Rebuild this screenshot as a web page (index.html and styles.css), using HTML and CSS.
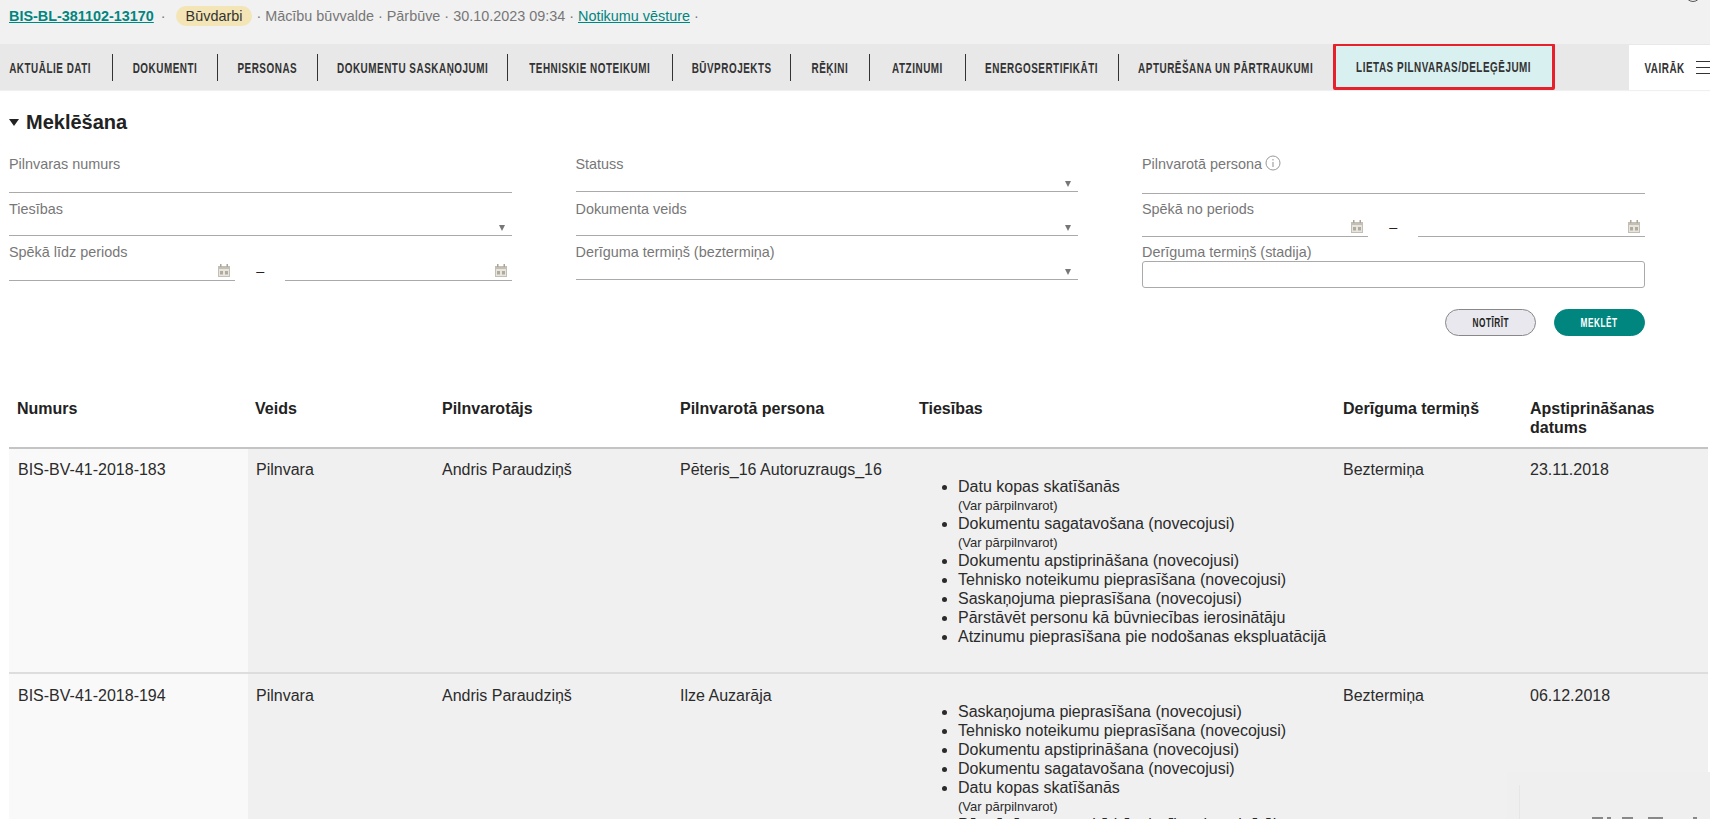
FILE: index.html
```html
<!DOCTYPE html>
<html lang="lv">
<head>
  <meta charset="UTF-8" />
  <title>Lietas pilnvaras/deleģējumi</title>
  <link rel="stylesheet" href="styles.css">
</head>
<body>
  <div class="topbar">
    <a class="case-link" href="#">BIS-BL-381102-13170</a>
    <span class="dot-first">·</span>
    <span class="badge">Būvdarbi</span>
    <span class="meta">· Mācību būvvalde · Pārbūve · 30.10.2023 09:34 ·</span>
    <a class="history-link" href="#">Notikumu vēsture</a>
    <span class="meta">·</span>
    <span class="user-circle"></span>
  </div>

  <nav class="tabs">
    <a class="tab tab-1" href="#"><span class="narrow">Aktuālie dati</span></a>
    <a class="tab tab-2" href="#"><span class="narrow">Dokumenti</span></a>
    <a class="tab tab-3" href="#"><span class="narrow">Personas</span></a>
    <a class="tab tab-4" href="#"><span class="narrow">Dokumentu saskaņojumi</span></a>
    <a class="tab tab-5" href="#"><span class="narrow">Tehniskie noteikumi</span></a>
    <a class="tab tab-6" href="#"><span class="narrow">Būvprojekts</span></a>
    <a class="tab tab-7" href="#"><span class="narrow">Rēķini</span></a>
    <a class="tab tab-8" href="#"><span class="narrow">Atzinumi</span></a>
    <a class="tab tab-9" href="#"><span class="narrow">Energosertifikāti</span></a>
    <a class="tab tab-10" href="#"><span class="narrow">Apturēšana un pārtraukumi</span></a>
    <a class="tab-active" href="#"><span class="narrow">Lietas pilnvaras/deleģējumi</span></a>
    <a class="tab-more" href="#">
      <span class="more-text"><span class="narrow">Vairāk</span></span>
      <span class="burger"><i></i><i></i><i></i></span>
    </a>
  </nav>

  <main class="content">
    <h2 class="search-title"><span class="caret"></span>Meklēšana</h2>

    <form class="search-form">
      <div class="field">
        <label>Pilnvaras numurs</label>
        <div class="control h-21"></div>
      </div>
      <div class="field">
        <label>Statuss</label>
        <div class="control h-20"><span class="arrow"></span></div>
      </div>
      <div class="field">
        <label class="label-info">Pilnvarotā persona
          <svg class="info" width="16" height="16" viewBox="0 0 16 16"><circle cx="8" cy="8" r="7" fill="none" stroke="#999" stroke-width="1"/><path d="M8 4v1.400M8 7v5" stroke="#999" stroke-width="1.100" fill="none"/></svg>
        </label>
        <div class="control h-22"></div>
      </div>

      <div class="field">
        <label>Tiesības</label>
        <div class="control h-19"><span class="arrow"></span></div>
      </div>
      <div class="field">
        <label>Dokumenta veids</label>
        <div class="control h-19"><span class="arrow"></span></div>
      </div>
      <div class="field">
        <label>Spēkā no periods</label>
        <div class="date-range h-20">
          <div class="control">
            <svg class="cal" width="12" height="13" viewBox="0 0 12 13"><use href="#cal-icon"/></svg>
          </div>
          <span class="dash">–</span>
          <div class="control">
            <svg class="cal" width="12" height="13" viewBox="0 0 12 13"><use href="#cal-icon"/></svg>
          </div>
        </div>
      </div>

      <div class="field">
        <label>Spēkā līdz periods</label>
        <div class="date-range h-21">
          <div class="control">
            <svg class="cal" width="12" height="13" viewBox="0 0 12 13"><use href="#cal-icon"/></svg>
          </div>
          <span class="dash">–</span>
          <div class="control">
            <svg class="cal" width="12" height="13" viewBox="0 0 12 13"><use href="#cal-icon"/></svg>
          </div>
        </div>
      </div>
      <div class="field">
        <label>Derīguma termiņš (beztermiņa)</label>
        <div class="control h-20"><span class="arrow"></span></div>
      </div>
      <div class="field">
        <label>Derīguma termiņš (stadija)</label>
        <div class="text-box"></div>
      </div>
    </form>

    <div class="form-buttons">
      <button class="btn btn-clear" type="button"><span class="narrow">Notīrīt</span></button>
      <button class="btn btn-search" type="button"><span class="narrow">Meklēt</span></button>
    </div>

    <table class="results">
      <thead>
        <tr>
          <th class="c-num">Numurs</th>
          <th class="c-type">Veids</th>
          <th class="c-from">Pilnvarotājs</th>
          <th class="c-to">Pilnvarotā persona</th>
          <th class="c-rights">Tiesības</th>
          <th class="c-term">Derīguma termiņš</th>
          <th class="c-date">Apstiprināšanas datums</th>
        </tr>
      </thead>
      <tbody>
        <tr>
          <td>BIS-BV-41-2018-183</td>
          <td>Pilnvara</td>
          <td>Andris Paraudziņš</td>
          <td>Pēteris_16 Autoruzraugs_16</td>
          <td>
            <ul>
              <li>Datu kopas skatīšanās<small>(Var pārpilnvarot)</small></li>
              <li>Dokumentu sagatavošana (novecojusi)<small>(Var pārpilnvarot)</small></li>
              <li>Dokumentu apstiprināšana (novecojusi)</li>
              <li>Tehnisko noteikumu pieprasīšana (novecojusi)</li>
              <li>Saskaņojuma pieprasīšana (novecojusi)</li>
              <li>Pārstāvēt personu kā būvniecības ierosinātāju</li>
              <li>Atzinumu pieprasīšana pie nodošanas ekspluatācijā</li>
            </ul>
          </td>
          <td>Beztermiņa</td>
          <td>23.11.2018</td>
        </tr>
        <tr>
          <td>BIS-BV-41-2018-194</td>
          <td>Pilnvara</td>
          <td>Andris Paraudziņš</td>
          <td>Ilze Auzarāja</td>
          <td>
            <ul>
              <li>Saskaņojuma pieprasīšana (novecojusi)</li>
              <li>Tehnisko noteikumu pieprasīšana (novecojusi)</li>
              <li>Dokumentu apstiprināšana (novecojusi)</li>
              <li>Dokumentu sagatavošana (novecojusi)</li>
              <li>Datu kopas skatīšanās<small>(Var pārpilnvarot)</small></li>
              <li>Pārstāvēt personu kā būvniecības ierosinātāju</li>
            </ul>
          </td>
          <td>Beztermiņa</td>
          <td>06.12.2018</td>
        </tr>
      </tbody>
    </table>
  </main>

  <div class="float-panel">
    <span class="float-line"></span>
    <div class="float-tops"><i></i><i></i><i></i><i></i><i></i></div>
  </div>

  <svg class="sprite" width="0" height="0">
    <symbol id="cal-icon" viewBox="0 0 12 13">
      <path d="M0 2h12v11H0z" fill="#c4bfb4"/>
      <path d="M2 0h1.500v3H2zM8.500 0H10v3H8.500z" fill="#aaa598"/>
      <path d="M1 5h10v7H1z" fill="#e8e5df"/>
      <path d="M2 7h3v3.500H2zM7 7h3v3.500H7z" fill="#b0ab9f"/>
    </symbol>
  </svg>
</body>
</html>
```

FILE: styles.css
```css
* { box-sizing: border-box; }
html, body {
  height: 100%;
  overflow: hidden;
}
body {
  margin: 0;
  font-family: "Liberation Sans", Arial, sans-serif;
  font-size: 16px;
  line-height: 19px;
  color: #2b2b2b;
  background: #fff;
}

/* there is no condensed font on the box, so squeeze the bold one */
.narrow {
  display: inline-block;
  flex: none;
  transform: scaleX(0.66);
  letter-spacing: 0.8px;
  white-space: nowrap;
}

/* top line */
.topbar {
  position: relative;
  display: flex;
  align-items: center;
  height: 44px;
  padding: 0 0 12px 9px;
  background: #f1f1f1;
  font-size: 14.4px;
  color: #777;
  white-space: pre;
}
.case-link {
  font-weight: bold;
  color: #00857f;
}
.dot-first { margin: 0 10px 0 7px; }
.badge {
  display: flex;
  align-items: center;
  height: 20px;
  padding: 0 10px;
  border-radius: 10px;
  background: #f3e5b5;
  color: #333;
}
.meta { margin-left: 4px; }
.history-link {
  margin-left: 4px;
  color: #00857f;
}
.user-circle {
  position: absolute;
  right: 9px;
  top: -14px;
  width: 16px;
  height: 16px;
  border: 1px solid #555;
  border-radius: 50%;
}

/* tabs */
.tabs {
  display: flex;
  align-items: center;
  height: 46px;
  background: #e8e8e8;
  box-shadow: 0 1px 1px rgba(0,0,0,0.06);
  font-weight: bold;
  font-size: 15px;
  text-transform: uppercase;
}
.tabs a {
  color: #333;
  text-decoration: none;
}
.tab {
  display: flex;
  flex: none;
  align-items: center;
  justify-content: center;
  height: 27px;
  border-right: 1px solid #333;
}
.tab-1 { width: 113px; padding-right: 12px; }
.tab-2 { width: 105px; }
.tab-3 { width: 100px; }
.tab-4 { width: 190px; }
.tab-5 { width: 165px; }
.tab-6 { width: 118px; }
.tab-7 { width: 79px; }
.tab-8 { width: 96px; }
.tab-9 { width: 153px; }
.tab-10 { width: 214px; border-right: none; }
.tab-active {
  display: flex;
  flex: none;
  align-items: center;
  justify-content: center;
  align-self: flex-start;
  width: 222px;
  height: 47px;
  margin-top: -1px;
  border: 3px solid #e8202c;
  border-radius: 2px;
  background: #d8f0f0;
}
.tab-more {
  display: flex;
  flex: none;
  align-items: center;
  align-self: flex-end;
  width: 81px;
  height: 45px;
  margin-left: auto;
  padding-left: 15px;
  background: #fff;
  overflow: hidden;
}
.more-text {
  display: flex;
  justify-content: center;
  width: 41px;
  margin-right: 11px;
}
.burger { flex: none; width: 16px; }
.burger i {
  display: block;
  height: 1px;
  margin: 5px 0;
  background: #333;
}

/* search form */
.content { padding: 0 2px 0 9px; }
.search-title {
  display: flex;
  align-items: center;
  height: 65px;
  margin: 0;
  font-size: 20px;
  color: #222;
}
.caret {
  width: 0;
  height: 0;
  margin-right: 7px;
  border-style: solid;
  border-width: 7px 5.500px 0;
  border-color: #222 transparent transparent;
}
.search-form {
  display: grid;
  grid-template-columns: repeat(3, 502.5px);
  grid-template-rows: 45px 43px auto;
  column-gap: 64px;
  width: 1636px;
  margin-top: 1px;
}
.field label {
  display: block;
  height: 16px;
  font-size: 14.4px;
  line-height: 16px;
  color: #777;
}
.label-info {
  display: flex !important;
  align-items: flex-end;
  gap: 3px;
}
.info { position: relative; top: -1px; }
.control {
  position: relative;
  flex: 1;
  border-bottom: 1px solid #aaa;
}
.h-19 { height: 19px; }
.h-20 { height: 20px; }
.h-21 { height: 21px; }
.h-22 { height: 22px; }
.arrow {
  position: absolute;
  right: 7px;
  bottom: 4px;
  width: 0;
  height: 0;
  border-style: solid;
  border-width: 6px 3.500px 0;
  border-color: #777 transparent transparent;
}
.date-range {
  display: flex;
}
.dash {
  align-self: flex-end;
  width: 50px;
  margin-bottom: 1px;
  text-align: center;
  font-size: 14.4px;
  line-height: 17px;
  color: #222;
}
.cal {
  position: absolute;
  right: 5px;
  bottom: 3px;
}
.text-box {
  height: 27px;
  margin-top: 1px;
  border: 1px solid #aaa;
  border-radius: 3px;
}
.form-buttons {
  display: flex;
  justify-content: flex-end;
  gap: 18px;
  width: 1636px;
  margin-top: 21px;
}
.btn {
  display: flex;
  align-items: center;
  justify-content: center;
  width: 91px;
  height: 27px;
  padding: 0;
  border-radius: 14px;
  font-family: "Liberation Sans", Arial, sans-serif;
  font-weight: bold;
  font-size: 12.5px;
  text-transform: uppercase;
}
.btn-clear {
  background: #e8e8ee;
  border: 1px solid #888;
  color: #222;
}
.btn-search {
  background: #00857f;
  border: 1px solid #00857f;
  color: #fff;
}

/* results */
.results {
  width: 1699px;
  margin-top: 51px;
  table-layout: fixed;
  border-collapse: collapse;
}
.results th {
  padding: 12px 8px 10px;
  border-bottom: 2px solid #c4c4c4;
  text-align: left;
  vertical-align: top;
  color: #222;
}
.results th.c-type { padding-left: 7px; }
.c-num { width: 239px; }
.c-type { width: 186px; }
.c-from { width: 238px; }
.c-to { width: 239px; }
.c-rights { width: 424px; }
.c-term { width: 187px; }
.c-date { width: 186px; }
.results td {
  padding: 11px 8px 12px;
  background: #f0f0f0;
  border-bottom: 2px solid #ddd;
  vertical-align: top;
}
.results td:first-child {
  padding-left: 9px;
  background: #f9f9f9;
}
.results ul {
  margin: 17px 0 14px;
  padding-left: 39px;
}
.results tr + tr td { padding-top: 12px; }
.results tr + tr ul { margin-top: 16px; }
.results small {
  display: block;
  padding-top: 1px;
  font-size: 13px;
  line-height: 17px;
}

/* panel that floats over the corner of the table */
.float-panel {
  position: fixed;
  right: 0;
  bottom: 0;
  width: 203px;
  height: 47px;
  background: #efefef;
}
.float-line {
  position: absolute;
  left: 12px;
  bottom: 0;
  height: 34px;
  border-left: 1px solid #e6e6e6;
}
.float-tops {
  position: absolute;
  left: 85px;
  bottom: 0;
  display: flex;
  height: 2px;
}
.float-tops i { background: #888; }
.float-tops i:nth-child(1) { width: 11px; }
.float-tops i:nth-child(2) { width: 4px; margin-left: 4px; }
.float-tops i:nth-child(3) { width: 11px; margin-left: 11px; }
.float-tops i:nth-child(4) { width: 15px; margin-left: 15px; }
.float-tops i:nth-child(5) { width: 4px; margin-left: 30px; }
.sprite { position: absolute; }
```
